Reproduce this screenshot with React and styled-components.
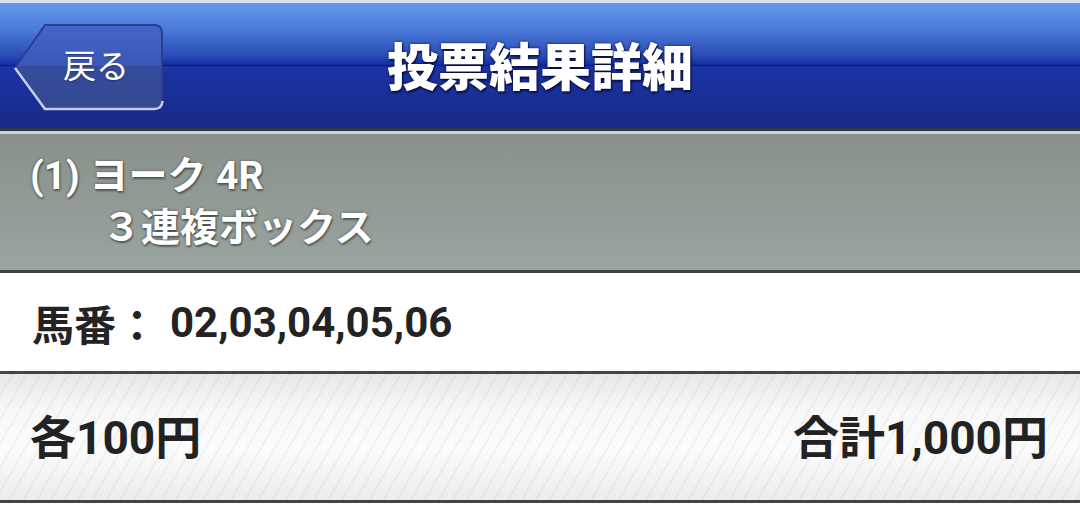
import React from "react";
import styled, { createGlobalStyle } from "styled-components";

const GlobalStyle = createGlobalStyle`
  html, body {
    margin: 0;
    padding: 0;
    background: #ffffff;
  }
  body {
    font-family: "Roboto", "Noto Sans CJK JP", sans-serif;
  }
`;

const Page = styled.div`
  width: 1080px;
  display: flex;
  flex-direction: column;
`;

const TopStrip = styled.div`
  height: 3px;
  background: #d8e2f0;
`;

const Header = styled.header`
  height: 125px;
  display: grid;
  grid-template-columns: 1fr auto 1fr;
  align-items: center;
  background: linear-gradient(
    to bottom,
    #6798ec 0%,
    #4a78d8 22%,
    #2a4cb8 42%,
    #1530a6 49%,
    #0b1c92 50%,
    #1c34a2 51%,
    #1a31a0 62%,
    #172a86 100%
  );
  border-bottom: 3px solid #2a3550;
  box-shadow: 0 3px 0 #c9d3ca;
`;

const BackButton = styled.button`
  position: relative;
  justify-self: start;
  margin-left: 14px;
  margin-top: 3px;
  width: 150px;
  height: 90px;
  padding: 0 0 0 32px;
  border: none;
  background: none;
  cursor: pointer;
  color: #ffffff;
  font-family: "Noto Sans CJK JP", sans-serif;
  font-size: 33px;
  font-weight: 400;
  display: flex;
  align-items: center;
  justify-content: center;
  text-shadow: 0 1px 2px rgba(0, 0, 0, 0.35);
`;

const ButtonShape = styled.svg`
  position: absolute;
  inset: 0;
  width: 100%;
  height: 100%;
`;

const ButtonLabel = styled.span`
  position: relative;
  margin-top: -6px;
  margin-left: -18px;
`;

const Title = styled.h1`
  margin: 0 0 4px;
  color: #ffffff;
  font-family: "Noto Sans CJK JP", sans-serif;
  font-size: 51px;
  font-weight: 900;
  text-shadow: 0 0 3px rgba(0, 0, 30, 0.8), 1px 2px 2px rgba(0, 0, 30, 0.6);
`;

const RaceInfo = styled.section`
  margin-top: 3px;
  height: 139px;
  box-sizing: border-box;
  padding: 16px 0 0 30px;
  background: linear-gradient(to bottom, #8a918c 0%, #939c96 60%, #9ba59f 100%);
  border-bottom: 3px solid #414141;
  color: #ffffff;
  font-size: 39px;
  font-weight: 700;
  line-height: 52px;
  text-shadow: 0 0 3px rgba(0, 0, 0, 0.45), 1px 2px 2px rgba(0, 0, 0, 0.35);
`;

const RaceLine = styled.div`
  padding-left: ${(p) => p.$indent || 0}px;
  white-space: pre;
`;

const HorseRow = styled.div`
  height: 101px;
  display: flex;
  align-items: center;
  padding: 0 0 0 32px;
  box-sizing: border-box;
  background: #ffffff;
  border-bottom: 3px solid #444444;
  color: #232323;
  font-size: 42px;
  font-weight: 700;
`;

const Label = styled.span`
  margin-right: 12px;
`;

const AmountRow = styled.div`
  height: 129px;
  box-sizing: border-box;
  display: flex;
  align-items: center;
  justify-content: space-between;
  padding: 0 32px 6px 30px;
  border-bottom: 3px solid #444444;
  color: #222222;
  font-size: 46px;
  font-weight: 700;
  background:
    repeating-linear-gradient(
      120deg,
      rgba(0, 0, 0, 0) 0px,
      rgba(0, 0, 0, 0) 10px,
      rgba(0, 0, 0, 0.035) 10px,
      rgba(0, 0, 0, 0.035) 12px
    ),
    linear-gradient(to bottom, #e8e8e8 0%, #f8f8f8 30%, #fbfbfb 60%, #ececec 100%);
`;

export default function App() {
  return (
    <>
      <GlobalStyle />
      <Page>
        <TopStrip />
        <Header>
          <BackButton>
            <ButtonShape viewBox="0 0 150 90" preserveAspectRatio="none">
              <defs>
                <linearGradient id="btnFill" x1="0" y1="0" x2="0" y2="1">
                  <stop offset="0" stopColor="#4466c8" />
                  <stop offset="0.5" stopColor="#3a57b4" />
                  <stop offset="0.5" stopColor="#354c9e" />
                  <stop offset="1" stopColor="#34498f" />
                </linearGradient>
              </defs>
              <path
                d="M1 46 L31 3 L140 3 Q148 3 148 11 L148 78 Q148 86 140 86 L31 86 Z"
                fill="url(#btnFill)"
                stroke="#2c3f8e"
                strokeWidth="2"
              />
              <path
                d="M1 46 L31 87 L140 87 Q148 87 148.5 79"
                fill="none"
                stroke="#c6cdf2"
                strokeWidth="2.5"
              />
            </ButtonShape>
            <ButtonLabel>戻る</ButtonLabel>
          </BackButton>
          <Title>投票結果詳細</Title>
          <div />
        </Header>
        <RaceInfo>
          <RaceLine>(1) ヨーク 4R</RaceLine>
          <RaceLine $indent={72}>３連複ボックス</RaceLine>
        </RaceInfo>
        <HorseRow>
          <Label>馬番：</Label>
          <span>02,03,04,05,06</span>
        </HorseRow>
        <AmountRow>
          <span>各100円</span>
          <span>合計1,000円</span>
        </AmountRow>
      </Page>
    </>
  );
}
